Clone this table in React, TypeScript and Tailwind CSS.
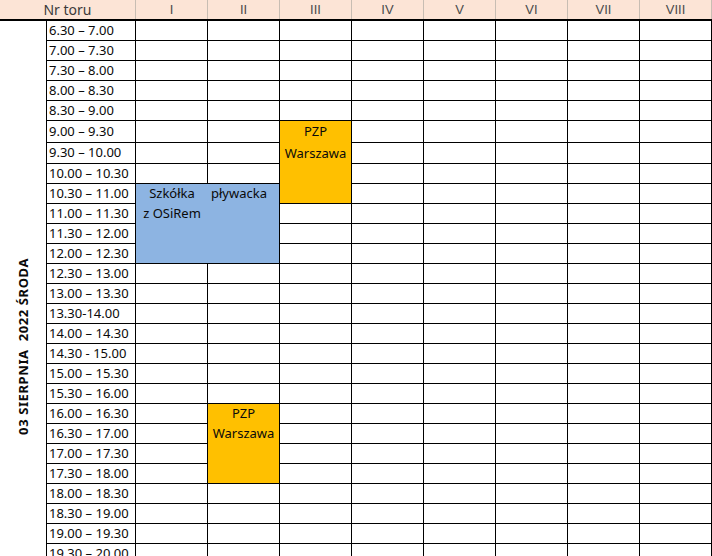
import React from "react";

const times = [
  "6.30 – 7.00",
  "7.00 – 7.30",
  "7.30 – 8.00",
  "8.00 – 8.30",
  "8.30 – 9.00",
  "9.00 – 9.30",
  "9.30 – 10.00",
  "10.00 – 10.30",
  "10.30 – 11.00",
  "11.00 – 11.30",
  "11.30 – 12.00",
  "12.00 – 12.30",
  "12.30 – 13.00",
  "13.00 – 13.30",
  "13.30-14.00",
  "14.00 – 14.30",
  "14.30 - 15.00",
  "15.00 – 15.30",
  "15.30 – 16.00",
  "16.00 – 16.30",
  "16.30 – 17.00",
  "17.00 – 17.30",
  "17.30 – 18.00",
  "18.00 – 18.30",
  "18.30 – 19.00",
  "19.00 – 19.30",
  "19.30 – 20.00",
];

const lanes = ["I", "II", "III", "IV", "V", "VI", "VII", "VIII"];

// occupied (row 1-based, lane 1-based)
function occupied(r: number, l: number) {
  if ((l === 1 || l === 2) && r >= 9 && r <= 12) return true;
  if (l === 3 && r >= 6 && r <= 9) return true;
  if (l === 2 && r >= 20 && r <= 23) return true;
  return false;
}

export default function App() {
  const cells: React.ReactNode[] = [];
  times.forEach((t, i) => {
    const r = i + 1;
    cells.push(
      <div
        key={`t${r}`}
        className="border-l border-r border-b border-black flex items-center pl-[2px] whitespace-nowrap overflow-hidden"
      >
        {t}
      </div>
    );
    for (let l = 1; l <= 8; l++) {
      if (occupied(r, l)) continue;
      cells.push(<div key={`c${r}-${l}`} className="border-r border-b border-black" />);
    }
  });

  return (
    <div
      className="w-[712px] h-[556px] overflow-hidden bg-white text-[13px] text-[#0a0a0a]"
      style={{ fontFamily: '"Noto Sans", "Liberation Sans", sans-serif' }}
    >
      {/* header */}
      <div className="flex h-[21px] border-b-2 border-black bg-[#FCE4D6] text-[14px] text-[#3a3a3a]">
        <div className="w-[136px] border-r border-[#c8bdb3] flex items-center justify-center">Nr toru</div>
        {lanes.map((l) => (
          <div
            key={l}
            className="w-[72px] border-r border-[#c8bdb3] flex items-center justify-center text-[#4a4a4a] text-[13px] font-['Liberation_Sans',sans-serif]"
          >
            {l}
          </div>
        ))}
      </div>

      {/* body */}
      <div className="flex">
        <div className="w-[46px] flex justify-center">
          <div className="mt-[237px] h-fit [writing-mode:vertical-rl] rotate-180 font-bold text-[13px] leading-[16px] tracking-[0.6px] whitespace-pre text-[#0a0a0a]">
            03 SIERPNIA  2022 ŚRODA
          </div>
        </div>
        <div className="grid grid-cols-[90px_repeat(8,72px)] grid-rows-[repeat(5,20px)_22px_21px_repeat(20,20px)]">
          {/* blue block */}
          <div className="col-start-2 col-span-2 row-start-9 row-span-4 bg-[#8DB4E2] border-r border-b border-black grid grid-cols-[72px_71px] grid-rows-[repeat(4,20px)]">
            <div className="flex items-center justify-center">Szkółka</div>
            <div className="flex items-center pl-[3px]">pływacka</div>
            <div className="flex items-center justify-center">z OSiRem</div>
            <div />
          </div>
          {/* orange block III */}
          <div className="col-start-4 row-start-6 row-span-4 bg-[#FFC000] border-r border-b border-black flex flex-col">
            <div className="h-[22px] flex items-center justify-center">PZP</div>
            <div className="h-[21px] flex items-center justify-center">Warszawa</div>
          </div>
          {/* orange block II */}
          <div className="col-start-3 row-start-20 row-span-4 bg-[#FFC000] border-r border-b border-black flex flex-col">
            <div className="h-[20px] flex items-center justify-center">PZP</div>
            <div className="h-[20px] flex items-center justify-center">Warszawa</div>
          </div>
          {cells}
        </div>
      </div>
    </div>
  );
}
